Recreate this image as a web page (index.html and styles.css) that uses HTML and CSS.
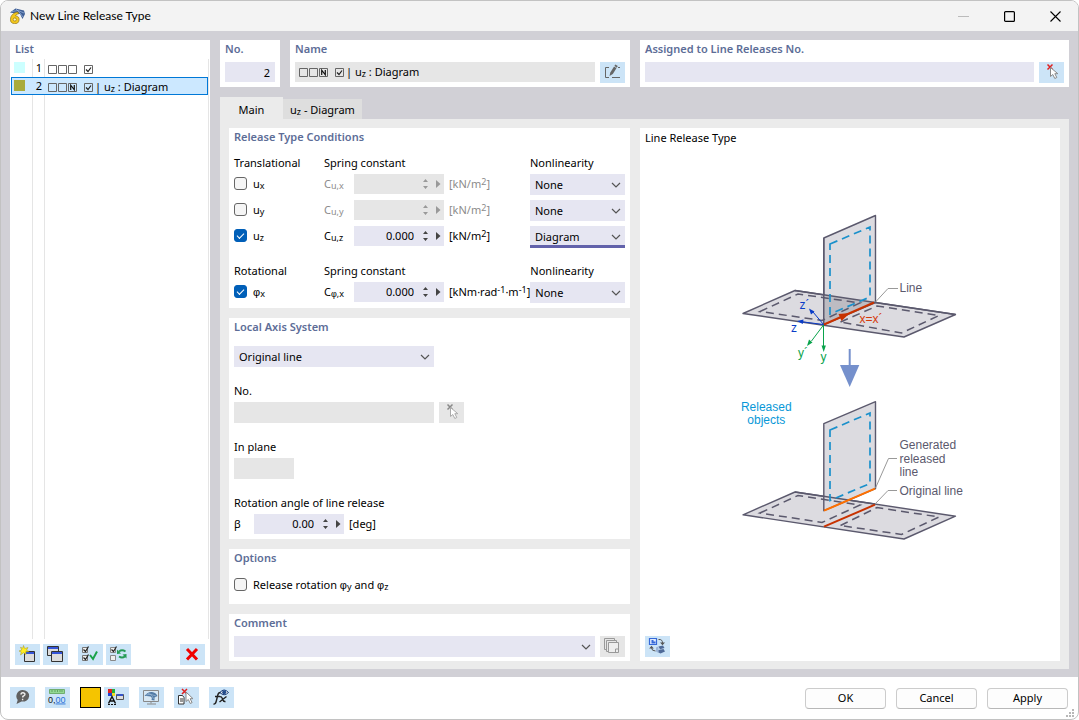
FILE: index.html
```html
<!DOCTYPE html>
<html lang="en">
<head>
<meta charset="utf-8">
<title>New Line Release Type</title>
<meta name="viewport" content="width=device-width, initial-scale=1">
<link rel="stylesheet" href="styles.css">
</head>
<body>
<svg class="defs" aria-hidden="true">
  <symbol id="chevron" viewBox="0 0 10 6"><path d="M1 1l4 4 4-4" fill="none" stroke="#555" stroke-width="1.200"/></symbol>
  <symbol id="updown" viewBox="0 0 6 12"><path d="M0 3.500L3 0l3 3.500zM0 8.500L3 12l3-3.500z" fill="currentColor"/></symbol>
  <symbol id="right" viewBox="0 0 5 8"><path d="M0 0l4.500 4L0 8z" fill="currentColor"/></symbol>
  <symbol id="tick" viewBox="0 0 9 9"><path d="M.5.5h8v8h-8z" fill="none" stroke="#666"/><path d="M2 4.500l2 2 3-4" fill="none" stroke="#222" stroke-width="1.200"/></symbol>
  <symbol id="box" viewBox="0 0 9 9"><path d="M.5.5h8v8h-8z" fill="none" stroke="#666"/></symbol>
  <symbol id="boxn" viewBox="0 0 9 9"><path d="M.5.5h8v8h-8z" fill="none" stroke="#666"/><path d="M2.700 7V2.200l3.600 4.600V2" fill="none" stroke="#111" stroke-width="1.200"/></symbol>
  <symbol id="pick" viewBox="0 0 25 21"><path class="pick-x" d="M8.500 2.500l5 5m0-5l-5 5" stroke-width="1.500"/><path class="pick-arrow" d="M11.500 5.500v9l2.300-2 2 4 2-1-2-3.800h3z"/></symbol>
</svg>
<div class="window">
  <header class="titlebar">
    <svg class="app-icon" viewBox="0 0 16 16"><path d="M1 4.500L6.500.5l8.500 2 1 3.500-2.500 5L11 6 4 5z" fill="#3f5f96"/><path d="M3 3.500l6-1 6 2.500M7 1l4 4 3 4" stroke="#9db8df" fill="none" stroke-width=".7"/><path d="M9 4C4.500 4.500 1.500 7.500 1.500 11.300A4.300 4 0 1 0 6.500 7.700C7 6.500 8 6 9.500 6z" fill="#f4c81c" stroke="#8f7420" stroke-width=".7"/><circle cx="5.800" cy="11.500" r="1.600" fill="#fff3b0" stroke="#8f7420" stroke-width=".7"/></svg>
    <h1>New Line Release Type</h1>
    <div class="window-buttons">
      <button aria-label="Minimize" disabled><svg viewBox="0 0 11 11"><path d="M0 5.500h11" stroke="#bbb"/></svg></button>
      <button aria-label="Maximize"><svg viewBox="0 0 11 11"><rect x=".6" y=".6" width="9.800" height="9.800" rx="1" fill="none" stroke="#000" stroke-width="1.200"/></svg></button>
      <button aria-label="Close"><svg viewBox="0 0 11 11"><path d="M.5.5l10 10m0-10l-10 10" stroke="#000" stroke-width="1.100"/></svg></button>
    </div>
  </header>

  <main class="body">
    <section class="card list-panel">
      <h2>List</h2>
      <ol class="list">
        <li><i class="swatch cyan"></i><span class="num">1</span><span class="release-name"><svg class="sq"><use href="#box"/></svg><svg class="sq"><use href="#box"/></svg><svg class="sq"><use href="#box"/></svg><svg class="sq tick"><use href="#tick"/></svg></span></li>
        <li class="selected"><i class="swatch olive"></i><span class="num">2</span><span class="release-name"><svg class="sq"><use href="#box"/></svg><svg class="sq"><use href="#box"/></svg><svg class="sq"><use href="#boxn"/></svg><svg class="sq tick"><use href="#tick"/></svg><span>| u<sub>z</sub> : Diagram</span></span></li>
      </ol>
      <div class="list-tools">
        <button class="tool" aria-label="New"><svg viewBox="0 0 25 21"><path d="M9.500 7.500h10v10h-10z" fill="#dcdcdc" stroke="#333"/><path d="M10 8h9v2h-9z" fill="#3454d8"/><path d="M8.500 1.500l1.200 3L13 3.500l-1.500 2.700 2.500 1.300-3.300.3.300 2.700-2.500-1.800L5.500 11l.8-3L4 7l2.800-1L5.500 3.300l2.300.9z" fill="#ffee20" stroke="#a59520" stroke-width=".5"/></svg></button>
        <button class="tool" aria-label="Copy"><svg viewBox="0 0 25 21"><path d="M4.500 2.500h11v9h-11z" fill="#dcdcdc" stroke="#333"/><path d="M5 3h10v2H5z" fill="#3454d8"/><path d="M8.500 7.500h11v10h-11z" fill="#dcdcdc" stroke="#333"/><path d="M9 8h10v2H9z" fill="#3454d8"/></svg></button>
        <button class="tool gap" aria-label="Select all"><svg viewBox="0 0 25 21"><g fill="#eee" stroke="#777"><path d="M4.500 3.500h5v5h-5zM4.500 11.500h5v5h-5z"/></g><path d="M5.500 5.500l2 2 3-5M5.500 13.500l2 2 3-5" stroke="#222" fill="none" stroke-width="1.200"/><path d="M12 11l3 4 4-7.500" stroke="#19a34a" stroke-width="2" fill="none"/></svg></button>
        <button class="tool" aria-label="Invert selection"><svg viewBox="0 0 25 21"><g fill="#eee" stroke="#888"><path d="M4.500 3.500h5v5h-5zM4.500 11.500h5v5h-5z"/></g><path d="M5.500 5.500l2 2 3-5" stroke="#222" fill="none" stroke-width="1.200"/><path d="M13 7.500q3-2.500 6.500 0M19 12.500q-3 2-6 0" stroke="#259b55" stroke-width="1.800" fill="none"/><path d="M11 10V5.500l4 4zM20.500 10v4.500l-4-4z" fill="#259b55"/></svg></button>
        <button class="tool end" aria-label="Delete"><svg viewBox="0 0 25 21"><path d="M7 5l10 10.500m0-10.500l-10 10.500" stroke="#f00000" stroke-width="3"/></svg></button>
      </div>
    </section>

    <div class="editor">
      <div class="top">
        <section class="card"><h2><label for="no">No.</label></h2><input id="no" class="field right" value="2"></section>
        <section class="card"><h2>Name</h2>
          <div class="line">
            <div class="field grow name-field disabled-field"><span class="release-name"><svg class="sq"><use href="#box"/></svg><svg class="sq"><use href="#box"/></svg><svg class="sq"><use href="#boxn"/></svg><svg class="sq tick"><use href="#tick"/></svg><span>| u<sub>z</sub> : Diagram</span></span></div>
            <button class="tool" aria-label="Edit name"><svg viewBox="0 0 25 21"><path d="M9 5.500H5.500v10H9M12 15.500h8M18 5.500h2" stroke="#666" fill="none"/><path d="M9.500 14l.8-3.500 5-8 2.500 1.500-5 8z" fill="#666"/><path d="M13.800 4l3 2" stroke="#cce4f7" stroke-width=".8"/></svg></button>
          </div>
        </section>
        <section class="card"><h2><label for="assigned">Assigned to Line Releases No.</label></h2>
          <div class="line"><input id="assigned" class="field grow"><button class="tool" aria-label="Pick line releases"><svg class="pick"><use href="#pick"/></svg></button></div>
        </section>
      </div>

      <div class="tabs" role="tablist">
        <button class="tab active" role="tab" aria-selected="true">Main</button>
        <button class="tab" role="tab" aria-selected="false">u<sub>z</sub> - Diagram</button>
      </div>

      <div class="panel">
        <div class="forms">
          <section class="card">
            <h2>Release Type Conditions</h2>
            <div class="conditions">
              <h3>Translational</h3><h3 class="spring">Spring constant</h3><h3>Nonlinearity</h3>
              <label class="check"><input type="checkbox"><span>u<sub>x</sub></span></label>
              <label class="off" for="cux">C<sub>u,x</sub></label>
              <span class="spin off"><input id="cux" disabled><svg class="ud"><use href="#updown"/></svg><svg class="rt"><use href="#right"/></svg></span>
              <span class="off">[kN/m<sup>2</sup>]</span>
              <span class="select"><select aria-label="Nonlinearity x"><option>None</option></select><svg><use href="#chevron"/></svg></span>
              <label class="check"><input type="checkbox"><span>u<sub>y</sub></span></label>
              <label class="off" for="cuy">C<sub>u,y</sub></label>
              <span class="spin off"><input id="cuy" disabled><svg class="ud"><use href="#updown"/></svg><svg class="rt"><use href="#right"/></svg></span>
              <span class="off">[kN/m<sup>2</sup>]</span>
              <span class="select"><select aria-label="Nonlinearity y"><option>None</option></select><svg><use href="#chevron"/></svg></span>
              <label class="check"><input type="checkbox" checked><span>u<sub>z</sub></span></label>
              <label for="cuz">C<sub>u,z</sub></label>
              <span class="spin"><input id="cuz" value="0.000"><svg class="ud"><use href="#updown"/></svg><svg class="rt"><use href="#right"/></svg></span>
              <span>[kN/m<sup>2</sup>]</span>
              <span class="select focus"><select aria-label="Nonlinearity z"><option>Diagram</option></select><svg><use href="#chevron"/></svg></span>
            </div>
            <div class="conditions second">
              <h3>Rotational</h3><h3 class="spring">Spring constant</h3><h3>Nonlinearity</h3>
              <label class="check"><input type="checkbox" checked><span><span class="greek">φ</span><sub>x</sub></span></label>
              <label for="cphi">C<sub><span class="greek">φ</span>,x</sub></label>
              <span class="spin"><input id="cphi" value="0.000"><svg class="ud"><use href="#updown"/></svg><svg class="rt"><use href="#right"/></svg></span>
              <span>[kNm·rad<sup>-1</sup>·m<sup>-1</sup>]</span>
              <span class="select"><select aria-label="Nonlinearity rotation"><option>None</option></select><svg><use href="#chevron"/></svg></span>
            </div>
          </section>

          <section class="card">
            <h2>Local Axis System</h2>
            <div class="axis">
              <span class="select wide"><select aria-label="Local axis system"><option>Original line</option></select><svg><use href="#chevron"/></svg></span>
              <div class="group"><label for="lineno">No.</label><div class="line"><input id="lineno" class="field tall wide" disabled><button class="tool" aria-label="Pick line" disabled><svg class="pick"><use href="#pick"/></svg></button></div></div>
              <div class="group"><label for="plane">In plane</label><input id="plane" class="field tall small" disabled></div>
              <div class="group"><span>Rotation angle of line release</span><div class="line angle"><label class="beta" for="beta">β</label><span class="spin"><input id="beta" value="0.00"><svg class="ud"><use href="#updown"/></svg><svg class="rt"><use href="#right"/></svg></span><span>[deg]</span></div></div>
            </div>
          </section>

          <section class="card">
            <h2>Options</h2>
            <label class="check option"><input type="checkbox"><span>Release rotation <span class="greek">φ</span><sub>y</sub> and <span class="greek">φ</span><sub>z</sub></span></label>
          </section>

          <section class="card">
            <h2>Comment</h2>
            <div class="line"><span class="select grow"><select aria-label="Comment"><option></option></select><svg><use href="#chevron"/></svg></span><button class="tool" aria-label="Comment library" disabled><svg viewBox="0 0 25 21"><path d="M6.500 13.500h-2v-11h10v2M8.500 15.500h-2v-11h10v2" fill="none" stroke="#999"/><path d="M8.500 6.500h10v10h-10zM15.500 16v-3h3" fill="#eee" stroke="#999"/></svg></button></div>
          </section>
        </div>

        <section class="card preview">
          <h3>Line Release Type</h3>
          <svg class="diagram" viewBox="730 205 240 340" role="img" aria-label="Line release before and after">
            <g stroke="#5b596d" stroke-width="1.400" stroke-linejoin="round">
              <path d="M743 313.500L795 290.500 955.500 314.500 904 337z" fill="#dcdbe0"/>
              <path d="M823.800 238L875.500 215.500V302.500L823.800 324.500z" fill="#dcdbe0"/>
              <path d="M824 295l51 7.500-51 22z" fill="#bdbcc2" stroke="none"/>
              <path d="M795 290.500L955.500 314.500" fill="none"/>
            </g>
            <path d="M760 311.500L798 294l62 9-38 17.500zM840.500 322L877 306l62 9.500-37.500 17.500z" fill="none" stroke="#5b596d" stroke-width="1.500" stroke-dasharray="8 5"/>
            <path d="M830 244L870 227v70l-40 17z" fill="none" stroke="#1a90cb" stroke-width="1.700" stroke-dasharray="8 5"/>
            <path d="M823.800 324.500V238" stroke="#5b596d" stroke-width="1.400"/>
            <path d="M824 324.500l50-22" stroke="#c83200" stroke-width="2.200"/><path d="M850 313l-11.500 1 3 7z" fill="#c83200"/>
            <path d="M823.500 324.500L813 312M823.500 324.500L802 321.800" stroke="#0a3cc8"/><path d="M809 308.500l5.500 3-3.500 3zM797 321l6.500-1.500-.7 4.500z" fill="#0a3cc8"/>
            <path d="M823.500 325v22M823.500 325l-12 16" stroke="#0aa34c"/><path d="M823.700 352l-2.200-6.500h4.400zM807 346l2-6.500 3.500 3z" fill="#0aa34c"/>
            <path d="M875.500 302L888 288.500h10" fill="none" stroke="#999"/>
            <path d="M849.700 349v17" stroke="#7590cc" stroke-width="2"/><path d="M840 365h19.300l-9.600 22z" fill="#7590cc"/>
            <g stroke="#5b596d" stroke-width="1.400" stroke-linejoin="round" fill="#dcdbe0">
              <path d="M743 514.800L795 492 955.500 516.200 904 539z"/>
              <path d="M823.800 423.700L875.500 401.700V488.700L823.800 510.700z"/>
              <path d="M795 492L875 504" fill="none"/>
            </g>
            <path d="M760 513L798 495.500l62 9.500-38 17.500zM840.500 525.500L877 507.500l62 9.500-37.500 17.500z" fill="none" stroke="#5b596d" stroke-width="1.500" stroke-dasharray="8 5"/>
            <path d="M830 430L870 413v70.500l-40 17z" fill="none" stroke="#1a90cb" stroke-width="1.700" stroke-dasharray="8 5"/>
            <path d="M824 510.700l51-22" stroke="#ff7000" stroke-width="2"/><path d="M824 526.700l51-22" stroke="#c83200" stroke-width="2"/>
            <path d="M875.500 488L888.500 458.500h8.500M875 504l13-13.500h9" fill="none" stroke="#999"/>
            <g class="art-text">
              <text x="899.500" y="292">Line</text>
              <text x="899.500" y="449">Generated</text><text x="899.500" y="462.500">released</text><text x="899.500" y="476">line</text>
              <text x="899.500" y="495">Original line</text>
              <g fill="#0898d8" text-anchor="middle"><text x="766.300" y="410.500">Released</text><text x="766.300" y="424">objects</text></g>
              <g fill="#0a3cc8"><text x="799.500" y="309">z´</text><text x="791" y="332">z</text></g>
              <g fill="#0aa34c"><text x="798" y="357">y´</text><text x="820.500" y="361">y</text></g>
              <text x="859.500" y="323" fill="#d63a0a">x=x´</text>
            </g>
          </svg>
          <button class="tool" aria-label="Switch view"><svg viewBox="0 0 25 21"><path d="M4.500 2.500h7v6h-7z" fill="#dfeaff" stroke="#3569d8" stroke-width="1.200"/><path d="M6.500 4h2v1.500h2V7.500h-4z" fill="#3569d8"/><path d="M13.500 3.500q4-.5 4 3.500M10.500 15q-4 0-4-3.500" fill="none" stroke="#555"/><path d="M15 6.500h5l-2.500 2.800zM4.200 12.500h4.600L6.500 9.800z" fill="#555"/><path d="M11 11.500l2.500-1v6.500l-2.500-1.500z" fill="#9bb4d8"/><path d="M13.500 10.500l4.500-1 1.500 2.500-4.500 1.300zM13.500 14l5-1 1.500 2.500-4.500 2-2-1z" fill="#4f6a98"/></svg></button>
        </section>
      </div>
    </div>
  </main>

  <footer class="footer">
    <div class="footer-tools">
      <button class="tool" aria-label="Help"><svg viewBox="0 0 25 21"><path d="M12.500 3a6.500 5.800 0 1 1-1 11.500L6.500 17l1.200-4A6.200 6.200 0 0 1 12.500 3z" fill="#606060"/><path d="M10.800 7.500q.5-2 2.300-1.800 2.300.5 1.700 2.200-.8 1-2 1.600v1M12.600 11.700v1.500" fill="none" stroke="#eee" stroke-width="1.400"/></svg></button>
      <button class="tool" aria-label="Units"><svg viewBox="0 0 25 21"><path d="M4.500 2.500h15v4h-15z" fill="#94d894" stroke="#6fae6f"/><path d="M7 3v2m3-2v2m2.500-2v2m2.500-2v2m2-2v2" stroke="#4c8f4c" stroke-width=".7"/><text x="3" y="15.500" class="units">0,<tspan fill="#2870d8" text-decoration="underline">00</tspan></text></svg></button>
      <button class="color" aria-label="Color"></button>
      <button class="tool" aria-label="Display properties"><svg viewBox="0 0 25 21"><path d="M4 2h4v4H4z" fill="#e02020"/><path d="M8 2h3v4H8z" fill="#20b040"/><path d="M4 6h4v3H4z" fill="#2040d0"/><path d="M8 6h3v3H8z" fill="#f4dc20"/><path d="M4.500 16.500L8 9.500l3.500 7M5.500 14h5" stroke="#111" stroke-width="1.400" fill="none"/><path d="M4 17.500h8" stroke="#111" stroke-dasharray="2 1"/><path d="M12.500 7.500h7v5h-7z" fill="#ddd" stroke="#555"/><path d="M13 7h6v2h-6z" fill="#3454c8"/></svg></button>
      <button class="tool" aria-label="Show in model"><svg viewBox="0 0 25 21"><path d="M4.500 3.500h15v11h-15zM12 14.500v2M8 17h9" fill="#d8e8f4" stroke="#888"/><path d="M5.500 9Q9 4.500 13 5q4 .5 5.500 4l-3 1.500v3l-3-.5q1-2.500-1-3.500-2-.8-6-.5z" fill="#527ba6"/><path d="M9 6.500q4 .5 5.500 5.500M7 8q4-2 10 1" fill="none" stroke="#a9c4de" stroke-width=".6"/></svg></button>
      <button class="tool" aria-label="Clear selection"><svg viewBox="0 0 25 21"><path d="M4.500 8.500h4l1.500 2v6.500H4.500z" fill="#fff" stroke="#333"/><path d="M6 12h3m-3 2h3" stroke="#333"/><path d="M8 2l5 5m0-5l-5 5" stroke="#e02020" stroke-width="1.500"/><path d="M12 5v9.500l2.300-2 2 4 1.800-.9-2-3.900H19z" fill="#fff" stroke="#888"/></svg></button>
      <button class="tool" aria-label="Function"><svg viewBox="0 0 25 21"><path d="M4.500 17q2 .5 2.800-3l1.500-6Q9.500 5 12 5.500M6 9.500h5M11 10q1.500-1 2.500 2t3 2.500M17.500 9.500l-7 5.500" fill="none" stroke="#222" stroke-width="1.400"/><path d="M11 5.500q4-5 8.500 0-4.500 4.500-8.500 0z" fill="#eee" stroke="#173a78"/><circle cx="15.200" cy="5.200" r="2" fill="#234c8c"/></svg></button>
    </div>
    <div class="actions"><button>OK</button><button>Cancel</button><button>Apply</button></div>
    <svg class="grip" viewBox="0 0 9 9"><path d="M6 0h2v2H6zM6 3h2v2H6zM3 3h2v2H3zM0 6h2v2H0zM3 6h2v2H3zM6 6h2v2H6z" fill="#b8b8b8"/></svg>
  </footer>
</div>
</body>
</html>
```

FILE: styles.css
```css
* { box-sizing: border-box; }
body { margin: 0; background: #fff; color: #000; font: 11px/18px "Noto Sans", "Open Sans", sans-serif; }
button, input, select { font: inherit; color: inherit; margin: 0; border: 0; border-radius: 0; padding: 0; outline: 0; }
button { background: none; }
svg { display: block; }
sub, sup { font-size: 9px; line-height: 0; vertical-align: baseline; position: relative; }
sub { top: 1px; }
sup { top: -3px; }
.greek { font-family: "Liberation Sans", Arial, sans-serif; }
.defs { position: absolute; width: 0; height: 0; }

.window { display: flex; flex-direction: column; min-height: 100vh; border: 1px solid #c2c2c2; border-radius: 8px; overflow: hidden; background: #fff; }
.titlebar { display: flex; align-items: center; height: 30px; padding-left: 8px; background: #f3f3f3; }
.app-icon { width: 16px; height: 16px; }
h1 { margin: 0 0 0 5px; font: 400 12px/18px Lato, "Noto Sans", sans-serif; }
.window-buttons { display: flex; margin-left: auto; }
.window-buttons button { width: 46px; height: 30px; display: grid; place-items: center; }
.window-buttons svg { width: 11px; height: 11px; }

.body { flex: 1; display: grid; grid-template-columns: 200px 1fr; gap: 10px; padding: 9px 9px 8px; background: #d1d0d6; }
.card { background: #fff; padding: 0 5px 5px; }
h2 { margin: 0; font-size: 11px; line-height: 18px; font-weight: 600; color: #5d6d97; }
h3 { margin: 0; font-size: 11px; font-weight: 400; }

.list-panel { display: flex; flex-direction: column; padding-bottom: 4px; }
.list { list-style: none; flex: 1; margin: 1px -4px 5px; padding: 0 1px 0 0; background: linear-gradient(#e5e5e5, #e5e5e5) 21px 0 / 1px 100% no-repeat, linear-gradient(#e5e5e5, #e5e5e5) 33px 0 / 1px 100% no-repeat, linear-gradient(#e5e5e5, #e5e5e5) 197px 0 / 1px 100% no-repeat; }
.list li { display: flex; align-items: flex-end; height: 18px; padding-left: 2px; border: 1px solid transparent; line-height: 16px; }
.list .selected { background: #cce8ff; border-color: #0078d7; }
.swatch { width: 11px; height: 11px; margin-bottom: 3px; }
.cyan { background: #ccffff; }
.olive { background: #a9ab3c; }
.num { width: 18px; padding-right: 1px; text-align: right; }
.release-name { display: flex; align-items: center; gap: 1px; white-space: nowrap; }
.list .release-name { margin-left: 5px; height: 14px; }
.sq { width: 9px; height: 9px; }
.tick { margin: 0 1px 0 6px; }
.list-tools { display: flex; gap: 3px; }
.list-tools .gap { margin-left: 7px; }
.list-tools .end { margin-left: auto; }

.tool { flex: none; width: 25px; height: 21px; background: #cce4f7; }
.tool svg { width: 25px; height: 21px; }
.tool:disabled { background: #e6e6e6; }
.pick { --x: #e02020; --edge: #888; }
:disabled .pick { --x: #888; --edge: #aaa; }
.pick-x { stroke: var(--x); }
.pick-arrow { fill: #fff; stroke: var(--edge); }

.editor { display: flex; flex-direction: column; min-width: 0; }
.top { display: grid; grid-template-columns: 60px 340px 1fr; gap: 10px; margin-bottom: 10px; }
.top .card { height: 47px; }
.top h2, .forms .card > h2:has(+ .line) { margin-bottom: 4px; }
.line { display: flex; gap: 5px; }
.angle { line-height: 20px; }
.grow { flex: 1; min-width: 0; }
.field { display: block; height: 20px; padding: 0 5px; background: #e6e6f2; }
.top input.right { width: 100%; text-align: right; }
.disabled-field, .field:disabled { background: #e6e6e6; }
.name-field { display: flex; align-items: center; padding-left: 4px; }
.tall { height: 21px; }
.wide { width: 200px; }
.small { width: 60px; }

.tabs { display: flex; align-items: flex-end; height: 22px; }
.tab { height: 20px; padding: 2px 7px 0; background: #dedede; }
.tab.active { width: 63px; height: 22px; padding-top: 4px; background: #ebebeb; }
.panel { flex: 1; display: grid; grid-template-columns: 401px 1fr; gap: 10px; padding: 9px 9px 8px; background: #ebebeb; }
.forms { display: flex; flex-direction: column; gap: 10px; }
.forms .card:last-child { padding-bottom: 4px; }

.conditions { display: grid; grid-template-columns: 90px 30px 90px 1fr 95px; row-gap: 5px; align-items: start; margin-top: 8px; line-height: 20px; white-space: nowrap; }
.conditions h3 { margin-bottom: -3px; line-height: 18px; }
.conditions .spring { grid-column: 2 / 5; }
.conditions .spin + span { padding-left: 5px; }
.conditions.second { margin-top: 15px; }
.off { color: #8b8b8b; }
.check { display: flex; align-items: center; gap: 6px; }
.check input { appearance: none; width: 13px; height: 13px; border: 1px solid #666; border-radius: 3px; background: #f5f5f5; display: grid; place-items: center; }
.conditions .check input, .option input { margin-bottom: 1px; }
.check input:checked { background: #005fb8; border-color: #005fb8; }
.check input:checked::after { content: ""; width: 6px; height: 3px; border: solid #fff; border-width: 0 0 1px 1px; transform: rotate(-45deg); margin-bottom: 2px; }
.option { margin: 9px 0 5px; }
.spin { display: flex; align-items: center; width: 90px; height: 20px; background: #e6e6f2; color: #444; }
.spin.off { background: #e6e6e6; color: #999; }
.spin input { width: 60px; height: 20px; background: none; text-align: right; color: #000; }
.ud { width: 5px; height: 12px; margin-left: 9px; }
.rt { width: 5px; height: 8px; margin-left: 8px; }
.select { display: flex; align-items: center; position: relative; height: 21px; background: #e6e6f2; }
.select select { appearance: none; width: 100%; height: 21px; padding: 0 20px 0 5px; background: none; }
.select svg { position: absolute; right: 4px; width: 10px; height: 6px; pointer-events: none; }
.focus { box-shadow: inset 0 -2px #6262ab, 0 1px #6262ab; height: 21px; }
.axis { display: flex; flex-direction: column; gap: 15px; margin-top: 10px; }
.group { display: flex; flex-direction: column; gap: 2px; }
.beta { width: 15px; }

.preview { display: flex; flex-direction: column; padding-bottom: 4px; }
.preview h3 { line-height: 20px; }
.diagram { align-self: center; width: 240px; height: 340px; margin-top: 57px; overflow: visible; }
.preview .tool { margin-top: auto; }
.art-text { font: 12px "Liberation Sans", Arial, sans-serif; fill: #5b596d; }
.units { font: 9px "Liberation Sans", Arial, sans-serif; fill: #111; }

.footer { position: relative; display: flex; justify-content: space-between; align-items: center; min-height: 42px; padding: 0 10px 0 9px; }
.footer-tools { display: flex; gap: 10px; padding-bottom: 2px; }
.footer-tools .color { width: 21px; height: 21px; border: 1px solid #000; background: #f5c400; }
.footer-tools .color + .tool { margin-left: -7px; }
.actions { display: flex; gap: 10px; }
.actions button { width: 81px; height: 21px; border: 1px solid #ccc; border-bottom-color: #b8b8b8; border-radius: 4px; background: #fdfdfd; }
.grip { position: absolute; right: 3px; bottom: 1px; width: 9px; height: 9px; }
```
